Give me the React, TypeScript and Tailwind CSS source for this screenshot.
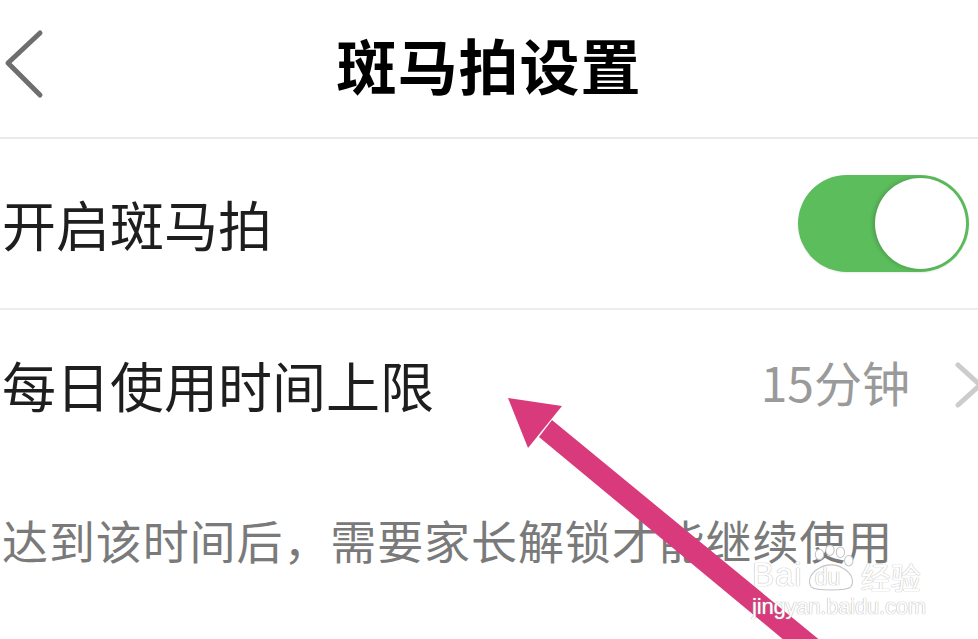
import { ReactNode } from 'react';

const CJK = "font-['Noto_Sans_CJK_SC','Noto_Sans',sans-serif]";

function Row({ children, className = '' }: { children: ReactNode; className?: string }) {
  return <div className={`flex items-center justify-between pl-[2px] ${className}`}>{children}</div>;
}

function Toggle() {
  // iOS style switch, on state
  return (
    <div className="w-[171px] h-[97px] rounded-full bg-[#5cbd5c] p-[3px] flex justify-end mr-[9px] shadow-[0_1px_2px_rgba(0,0,0,0.08)]">
      <div className="w-[91px] h-[91px] rounded-full bg-white shadow-[-2px_0_4px_rgba(0,0,0,0.18)]" />
    </div>
  );
}

function Watermark() {
  return (
    <div className="absolute left-[752px] top-[545px] flex flex-col items-start pointer-events-none select-none">
      <div className="flex items-end h-[46px]">
        <span className="font-['Liberation_Sans',sans-serif] text-[33px] leading-none text-white [text-shadow:0_0_1px_#b8b8b8,0_0_1px_#b8b8b8] tracking-[1px]">Bai</span>
        <div className="relative w-[54px] h-[46px] mx-[1px]">
          <svg width="54" height="46" viewBox="0 0 50 44" className="absolute inset-0">
            <g fill="white" stroke="#c4c4c4" strokeWidth="1">
              <ellipse cx="14" cy="9" rx="4" ry="5" />
              <ellipse cx="24" cy="5" rx="4" ry="5" />
              <ellipse cx="34" cy="7" rx="4" ry="5" />
              <ellipse cx="42" cy="15" rx="4" ry="5" />
              <path d="M6 40 C2 34 6 26 14 22 C20 18 30 18 36 22 C44 26 48 34 44 40 C40 44 10 44 6 40 Z" />
            </g>
          </svg>
          <span className="absolute left-[11px] top-[21px] font-['Liberation_Sans',sans-serif] text-[23px] leading-none text-white [text-shadow:0_0_1px_#b0b0b0,0_0_1px_#b0b0b0]">du</span>
        </div>
        <span className={`${CJK} text-[30px] leading-none text-white [text-shadow:0_0_1px_#b8b8b8,0_0_1px_#b8b8b8] ml-[2px]`}>经验</span>
      </div>
      <span className="font-['Liberation_Sans',sans-serif] text-[22px] leading-none mt-[5px] text-white [text-shadow:0_0_1px_#b0b0b0,0_0_1px_#b0b0b0] tracking-[-0.2px]">jingyan.baidu.com</span>
    </div>
  );
}

function Arrow() {
  return (
    <svg width="978" height="639" viewBox="0 0 978 639" className="absolute inset-0 pointer-events-none">
      <polygon points="552,420 822,642 808,660 539,437" fill="#d93a7b" />
      <polygon points="508,398 562,406 528,448" fill="#d93a7b" />
    </svg>
  );
}

export default function App() {
  return (
    <div className={`relative w-[978px] h-[639px] overflow-hidden bg-white ${CJK}`}>
      {/* header */}
      <div className="h-[137px] grid grid-cols-[1fr_auto_1fr] items-center pb-[10px]">
        <svg width="48" height="70" viewBox="0 0 48 70" className="ml-[2px]">
          <path d="M38 4 L6 34 L38 66" fill="none" stroke="#6e6e6e" strokeWidth="5" strokeLinecap="round" strokeLinejoin="round" />
        </svg>
        <h1 className="text-[60px] font-bold leading-none text-black tracking-[1px]">斑马拍设置</h1>
        <div />
      </div>
      <div className="h-[2px] bg-[#ebebeb]" />

      <Row className="h-[169px]">
        <span className="text-[54px] leading-none text-[#1e1e1e]">开启斑马拍</span>
        <Toggle />
      </Row>
      <div className="h-[2px] bg-[#ececec]" />

      <Row className="h-[158px] pb-[8px]">
        <span className="text-[54px] leading-none text-[#1e1e1e]">每日使用时间上限</span>
        <div className="flex items-center gap-[44px] -mr-[6px]">
          <span className="text-[48px] leading-none text-[#9a9a9a] pb-[8px]">15分钟</span>
          <svg width="30" height="48" viewBox="0 0 30 48">
            <path d="M4 4 L26 24 L4 44" fill="none" stroke="#cccccc" strokeWidth="5" strokeLinecap="round" strokeLinejoin="round" />
          </svg>
        </div>
      </Row>

      <div className="pl-[2px] pt-[48px]">
        <p className="text-[46px] leading-none text-[#7a7a7a] tracking-[0.9px]">达到该时间后，需要家长解锁才能继续使用</p>
      </div>

      <Arrow />
      <Watermark />
    </div>
  );
}
